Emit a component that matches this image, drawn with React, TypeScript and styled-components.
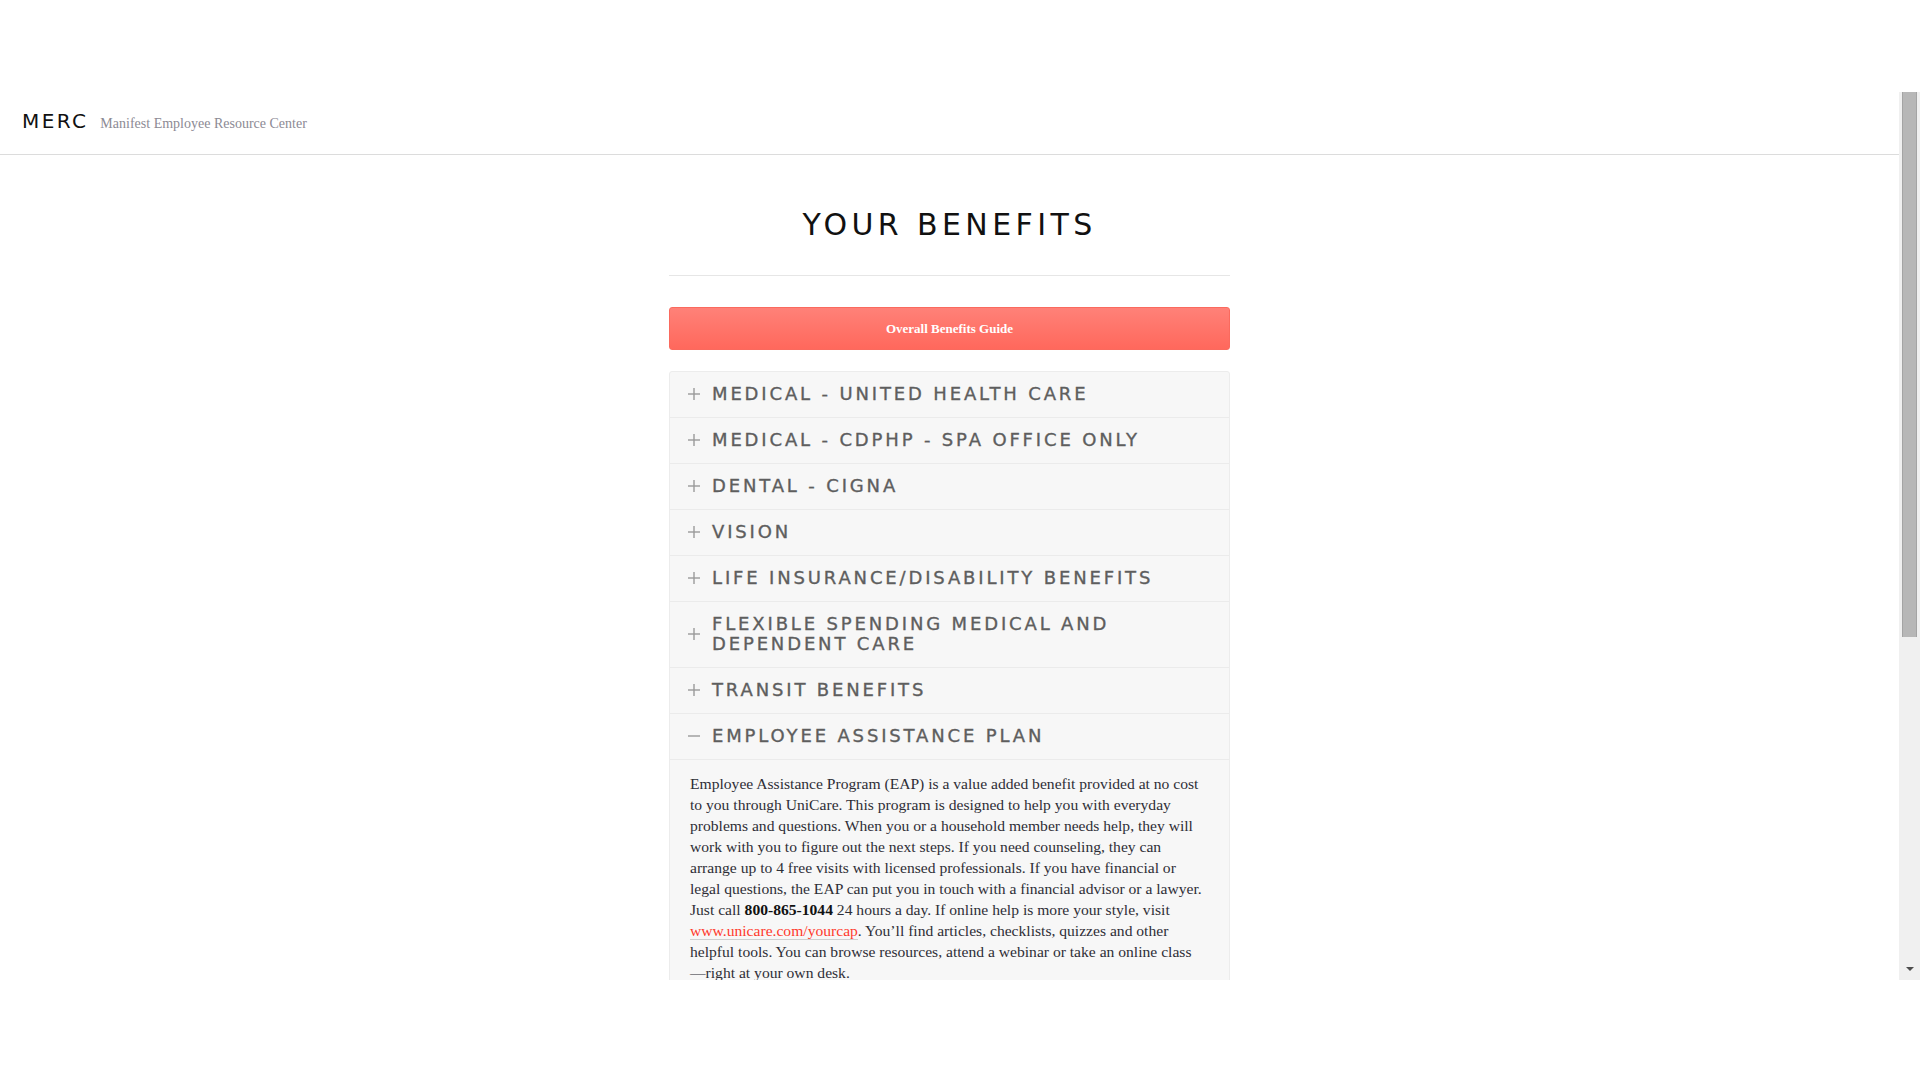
import React from "react";
import styled, { createGlobalStyle } from "styled-components";

const GlobalStyle = createGlobalStyle`
  html, body {
    margin: 0;
    padding: 0;
    background: #fff;
  }
  body {
    font-family: "Liberation Serif", serif;
    overflow: hidden;
  }
`;

type Benefit = {
  title: string;
  open?: boolean;
};

const benefits: Benefit[] = [
  { title: "Medical - United Health Care" },
  { title: "Medical - CDPHP - SPA Office Only" },
  { title: "Dental - Cigna" },
  { title: "Vision" },
  { title: "Life Insurance/Disability Benefits" },
  { title: "Flexible Spending Medical and Dependent Care" },
  { title: "Transit Benefits" },
  { title: "Employee Assistance Plan", open: true },
];

function ToggleIcon({ open }: { open?: boolean }) {
  return (
    <svg width="12" height="12" viewBox="0 0 12 12">
      <path d="M0 6h12" stroke="#9a9a9a" strokeWidth="1.4" />
      {!open && <path d="M6 0v12" stroke="#9a9a9a" strokeWidth="1.4" />}
    </svg>
  );
}

function App() {
  return (
    <Page>
      <GlobalStyle />
      <TopGap />
      <Frame>
        <Viewport>
          <Header>
            <Brand>MERC</Brand>
            <Tagline>Manifest Employee Resource Center</Tagline>
          </Header>

          <Main>
            <Title>Your Benefits</Title>
            <Rule />
            <GuideButton href="#">Overall Benefits Guide</GuideButton>

            <Accordion>
              {benefits.map((b) => (
                <Item key={b.title}>
                  <ItemHead>
                    <IconSlot>
                      <ToggleIcon open={b.open} />
                    </IconSlot>
                    <ItemTitle>{b.title}</ItemTitle>
                  </ItemHead>
                  {b.open && (
                    <ItemBody>
                      Employee Assistance Program (EAP) is a value added benefit provided at no cost
                      to you through UniCare. This program is designed to help you with everyday
                      problems and questions. When you or a household member needs help, they will
                      work with you to figure out the next steps. If you need counseling, they can
                      arrange up to 4 free visits with licensed professionals. If you have financial or
                      legal questions, the EAP can put you in touch with a financial advisor or a lawyer.
                      Just call <strong>800-865-1044</strong> 24 hours a day. If online help is more
                      your style, visit <BodyLink href="#">www.unicare.com/yourcap</BodyLink>. You’ll
                      find articles, checklists, quizzes and other helpful tools. You can browse
                      resources, attend a webinar or take an online class{"\u2014\u2060"}right at your own desk.
                    </ItemBody>
                  )}
                </Item>
              ))}
            </Accordion>
          </Main>
        </Viewport>

        <ScrollTrack>
          <ScrollThumb />
          <ScrollArrow />
        </ScrollTrack>
      </Frame>
    </Page>
  );
}

export default App;

const Page = styled.div`
  width: 100vw;
  height: 100vh;
  display: flex;
  flex-direction: column;
  background: #fff;
`;

const TopGap = styled.div`
  height: 92px;
  flex: none;
`;

const Frame = styled.div`
  height: 888px;
  flex: none;
  display: flex;
`;

const Viewport = styled.div`
  flex: 1;
  min-width: 0;
  overflow: hidden;
`;

const ScrollTrack = styled.div`
  width: 21px;
  flex: none;
  background: #f0f0f0;
  display: flex;
  flex-direction: column;
  align-items: center;
`;

const ScrollThumb = styled.div`
  width: 15px;
  height: 545px;
  box-sizing: border-box;
  background: #b7b7b7;
  border-left: 1px solid #a4a4a4;
  border-right: 1px solid #a4a4a4;
`;

const ScrollArrow = styled.div`
  margin-top: auto;
  margin-bottom: 9px;
  width: 0;
  height: 0;
  border-left: 4px solid transparent;
  border-right: 4px solid transparent;
  border-top: 4px solid #4d4d4d;
`;

const Header = styled.header`
  height: 63px;
  box-sizing: border-box;
  padding: 17px 22px 0;
  display: flex;
  align-items: baseline;
  gap: 12px;
  border-bottom: 1px solid #dcdcdc;
`;

const Brand = styled.span`
  font-family: "DejaVu Sans", sans-serif;
  font-size: 20px;
  letter-spacing: 2.4px;
  color: #111;
`;

const Tagline = styled.span`
  font-family: "Liberation Serif", serif;
  font-size: 14px;
  color: #8c8a94;
`;

const Main = styled.main`
  width: 561px;
  margin: 0 auto;
  padding: 52px 0 520px;
`;

const Title = styled.h1`
  margin: 0;
  font-family: "DejaVu Sans", sans-serif;
  font-weight: normal;
  font-size: 30px;
  line-height: 36px;
  letter-spacing: 4.4px;
  text-transform: uppercase;
  text-align: center;
  color: #111;
`;

const Rule = styled.hr`
  margin: 32px 0 31px;
  border: none;
  border-top: 1px solid #e6e6e6;
`;

const GuideButton = styled.a`
  display: flex;
  align-items: center;
  justify-content: center;
  height: 43px;
  box-sizing: border-box;
  border: 1px solid #fa6a5e;
  border-radius: 3px;
  background: linear-gradient(to bottom, #ff8178, #ff685c);
  color: #fff;
  font-family: "Liberation Serif", serif;
  font-weight: bold;
  font-size: 13px;
  text-decoration: none;
`;

const Accordion = styled.div`
  margin-top: 21px;
  border: 1px solid #ececec;
  border-radius: 3px;
  background: #f7f7f7;
`;

const Item = styled.section`
  & + & {
    border-top: 1px solid #ebebeb;
  }
`;

const ItemHead = styled.div`
  display: flex;
  align-items: center;
  padding: 12px 20px 13px 18px;
  cursor: pointer;
`;

const IconSlot = styled.span`
  width: 12px;
  display: flex;
  margin-right: 12px;
  flex: none;
`;

const ItemTitle = styled.h3`
  margin: 0;
  font-family: "DejaVu Sans", sans-serif;
  font-weight: normal;
  font-size: 18px;
  line-height: 20px;
  letter-spacing: 2.85px;
  text-transform: uppercase;
  color: #5e5e5e;
  -webkit-text-stroke: 0.35px #5e5e5e;
`;

const ItemBody = styled.div`
  border-top: 1px solid #ebebeb;
  padding: 13px 20px 14px 20px;
  font-family: "Liberation Serif", serif;
  font-size: 15.6px;
  line-height: 21px;
  color: #2e2e36;

  strong {
    color: #111;
  }
`;

const BodyLink = styled.a`
  color: #ff3a2c;
  text-decoration: none;
  border-bottom: 1px solid #cfcfcf;
`;
